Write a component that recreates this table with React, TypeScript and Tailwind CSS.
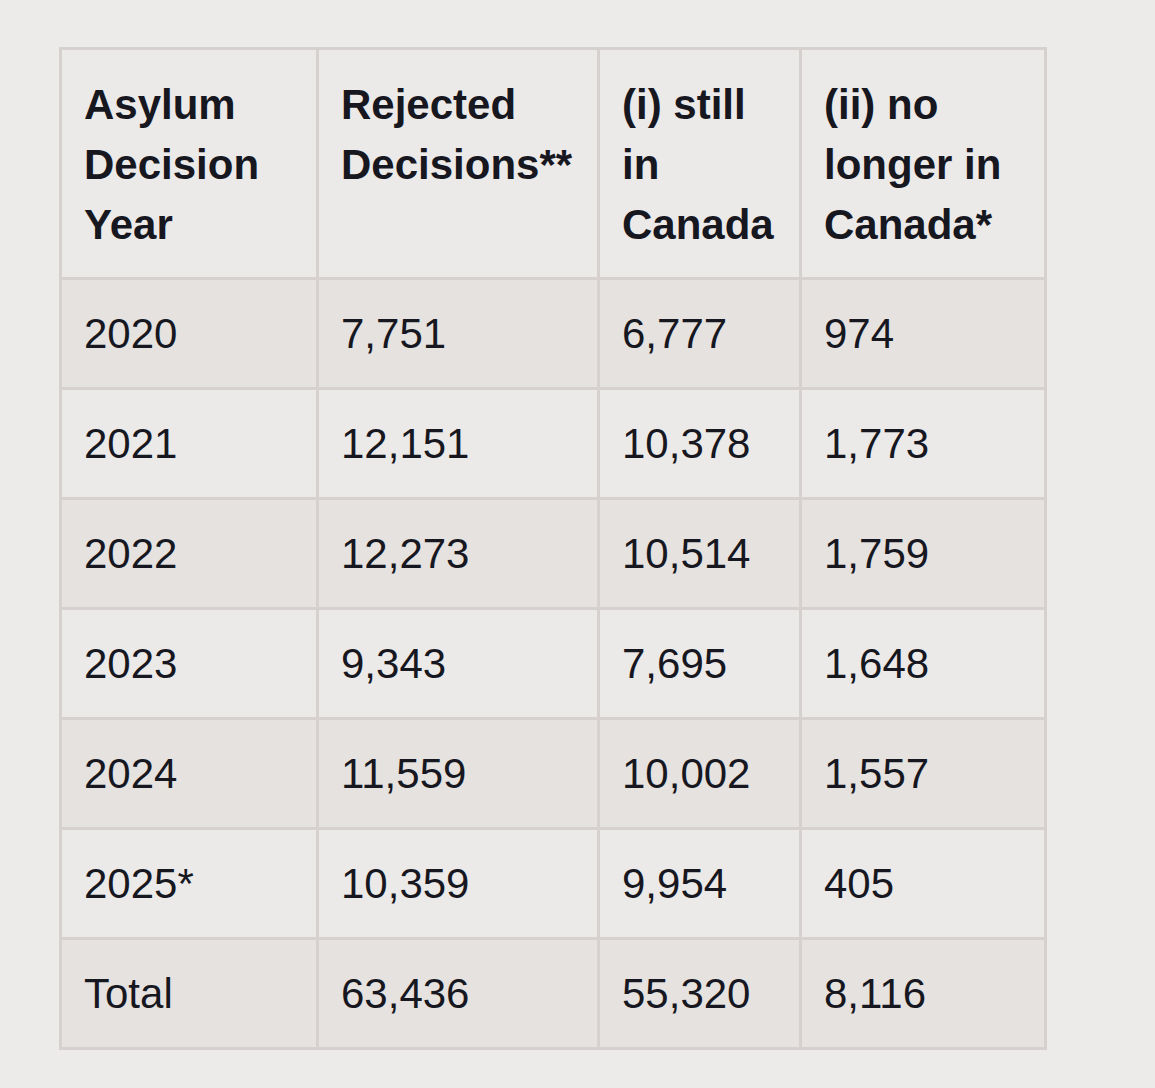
const header = [
  ['Asylum', 'Decision', 'Year'],
  ['Rejected', 'Decisions**'],
  ['(i) still', 'in', 'Canada'],
  ['(ii) no', 'longer in', 'Canada*'],
];

const rows = [
  ['2020', '7,751', '6,777', '974'],
  ['2021', '12,151', '10,378', '1,773'],
  ['2022', '12,273', '10,514', '1,759'],
  ['2023', '9,343', '7,695', '1,648'],
  ['2024', '11,559', '10,002', '1,557'],
  ['2025*', '10,359', '9,954', '405'],
  ['Total', '63,436', '55,320', '8,116'],
];

const widths = ['w-[257px]', 'w-[281px]', 'w-[202px]', 'w-[245px]'];

export default function App() {
  return (
    <div className="min-h-[1088px] w-full bg-[#edebea] pt-[47px] pl-[59px] font-['Liberation_Sans',Arial,sans-serif] text-[#17171f]">
      <table className="border-collapse table-fixed w-[987px]">
        <thead>
          <tr className="h-[230px] bg-[#eceae9]">
            {header.map((lines, i) => (
              <th
                key={i}
                className={`${widths[i]} border-[3px] border-[#d6d1cf] align-top pt-[25px] pl-[22px] pr-1 text-left text-[42px] leading-[60px] font-bold`}
              >
                {lines.map((l) => (
                  <div key={l} className="whitespace-nowrap">{l}</div>
                ))}
              </th>
            ))}
          </tr>
        </thead>
        <tbody>
          {rows.map((r, ri) => (
            <tr key={r[0]} className={`h-[110px] ${ri % 2 === 0 ? 'bg-[#e5e2df]' : 'bg-[#eceae9]'}`}>
              {r.map((c, ci) => (
                <td
                  key={ci}
                  className="border-[3px] border-[#d6d1cf] align-middle pl-[22px] text-[42px] leading-[60px]"
                >
                  {c}
                </td>
              ))}
            </tr>
          ))}
        </tbody>
      </table>
    </div>
  );
}
